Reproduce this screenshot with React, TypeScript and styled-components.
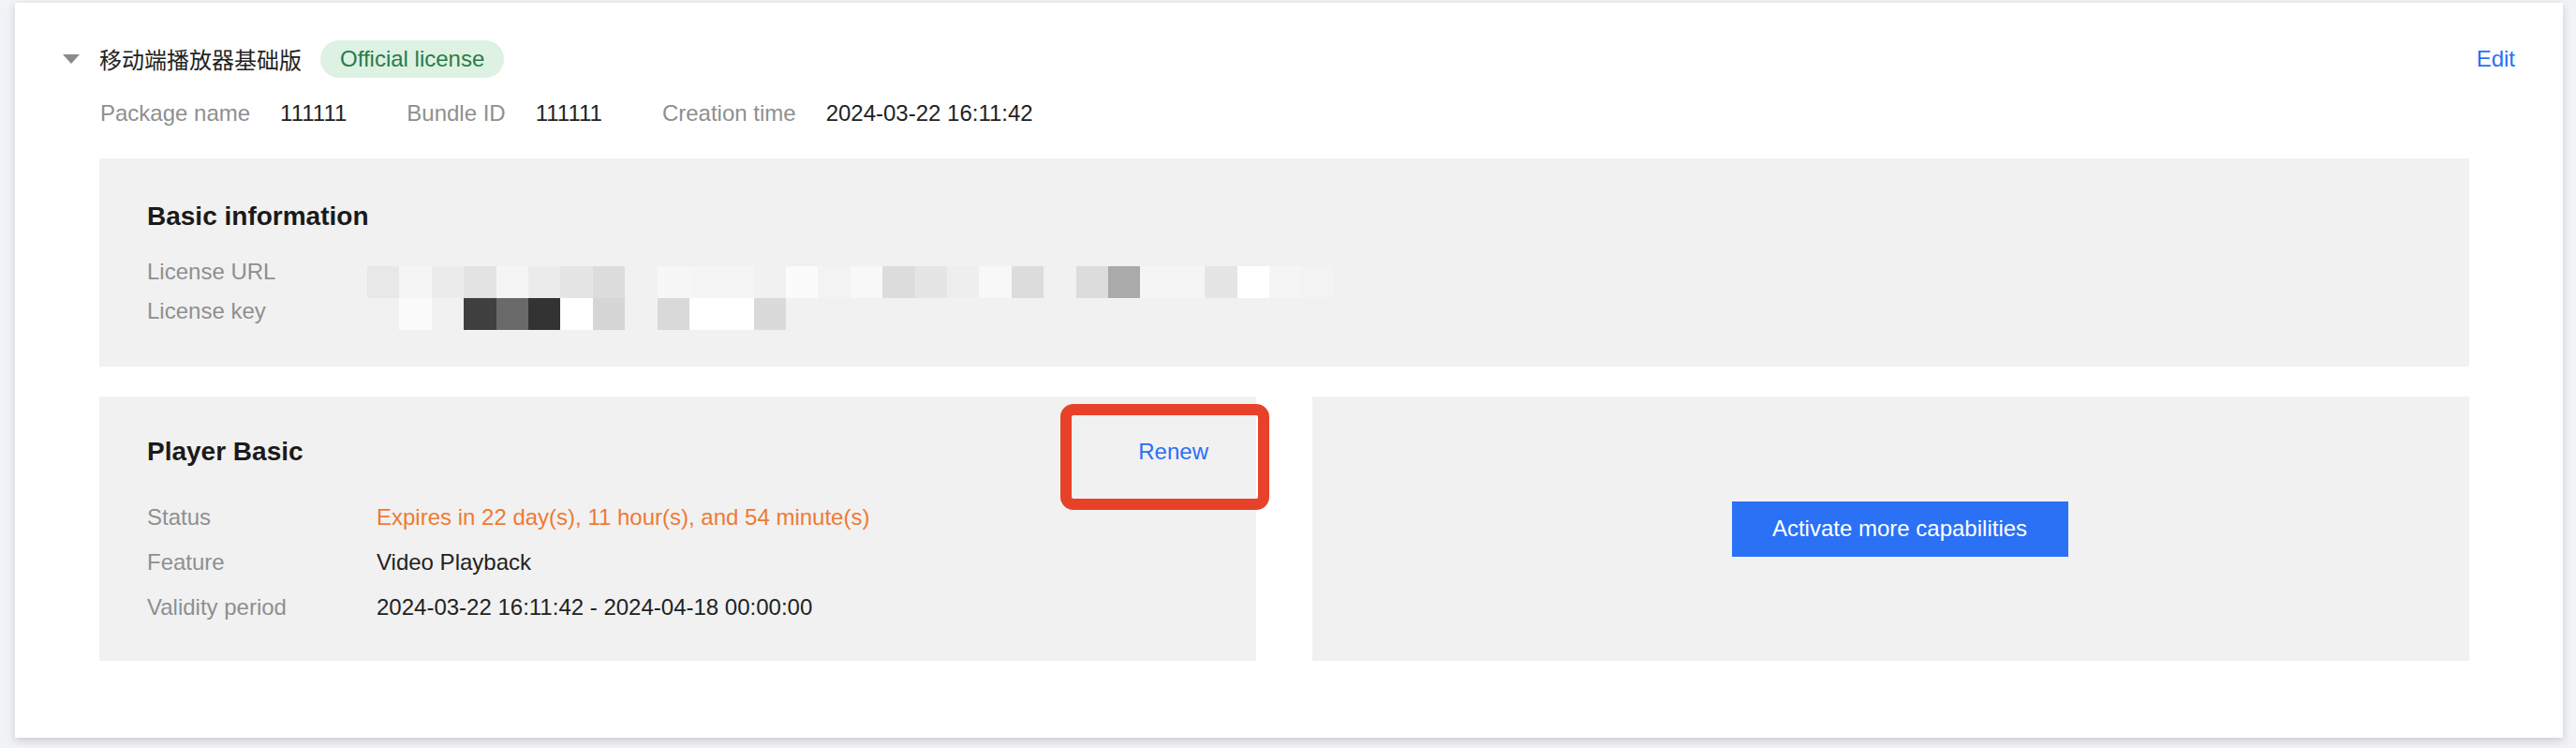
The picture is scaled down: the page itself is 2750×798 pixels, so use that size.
import styled, { createGlobalStyle } from "styled-components";

const GlobalStyle = createGlobalStyle`
    html, body {
        margin: 0;
        padding: 0;
        background: #f2f3f6;
    }
    body {
        font-family: "Liberation Sans", "Noto Sans CJK SC", Arial, sans-serif;
        color: #222;
    }
`;

const Page = styled.div`
    padding: 3px 14px 11px 16px;
`;

const Card = styled.section`
    background: #fff;
    padding: 40px 51px 82px 51px;
    box-shadow: 0 3px 9px rgba(60, 64, 90, 0.22);
`;

const HeaderRow = styled.div`
    display: flex;
    align-items: center;
    height: 40px;
`;

const Caret = styled.span`
    width: 0;
    height: 0;
    border-left: 9.5px solid transparent;
    border-right: 9.5px solid transparent;
    border-top: 10px solid #8a8a8a;
    margin-right: 21px;
`;

const Title = styled.h2`
    margin: 0;
    font-size: 24px;
    font-weight: 400;
    line-height: 40px;
    color: #222;
    font-family: "Noto Sans CJK SC", "Liberation Sans", sans-serif;
`;

const Tag = styled.span`
    margin-left: 20px;
    height: 40px;
    line-height: 40px;
    padding: 0 21px;
    border-radius: 20px;
    background: #ddf2e3;
    color: #2b7a49;
    font-size: 24px;
`;

const TextLink = styled.a`
    color: #2a6ff6;
    font-size: 24px;
    line-height: 40px;
    cursor: pointer;
    text-decoration: none;
`;

const Spacer = styled.div`
    flex: 1;
`;

const MetaRow = styled.div`
    display: flex;
    align-items: center;
    margin: 20px 0 0 40px;
    font-size: 24px;
    line-height: 36px;
`;

const MetaLabel = styled.span`
    color: #8f8f8f;
    margin-right: 32px;
`;

const MetaValue = styled.span`
    color: #222;
    margin-right: 64px;
`;

const Panels = styled.div`
    margin: 30px 49px 0 39px;
    display: flex;
    flex-direction: column;
    gap: 32px;
`;

const Panel = styled.div`
    background: #f1f1f1;
    padding: 42px 51px 39px 51px;
`;

const PanelTitle = styled.h3`
    margin: 0;
    font-size: 28px;
    font-weight: 700;
    line-height: 40px;
    color: #1a1a1a;
`;

const BasicBody = styled.div`
    display: flex;
    margin-top: 19px;
`;

const LabelCol = styled.div`
    width: 235px;
    display: flex;
    flex-direction: column;
    gap: 2px;
`;

const Label = styled.div`
    color: #8f8f8f;
    font-size: 24px;
    line-height: 40px;
`;

const Redacted = styled.div`
    margin-top: 14px;
    display: flex;
    flex-direction: column;
`;

const RedactedRow = styled.div`
    display: flex;
    height: 34px;
`;

const Cell = styled.span<{ $shade: string }>`
    width: 34.4px;
    height: 34px;
    background: ${(p) => p.$shade};
`;

const BottomRow = styled.div`
    display: grid;
    grid-template-columns: 1fr 1fr;
    gap: 60px;
    height: 282px;
`;

const PlanPanel = styled(Panel)`
    position: relative;
    padding: 39px 51px 36px 51px;
`;

const PlanHeader = styled.div`
    display: flex;
    align-items: center;
    justify-content: space-between;
`;

const Rows = styled.div`
    margin-top: 30px;
    display: flex;
    flex-direction: column;
    gap: 8px;
`;

const Row = styled.div`
    display: flex;
    font-size: 24px;
    line-height: 40px;
`;

const RowLabel = styled.span`
    width: 245px;
    color: #8f8f8f;
`;

const RowValue = styled.span<{ $warn?: boolean }>`
    color: ${(p) => (p.$warn ? "#ef7a32" : "#222")};
`;

const Highlight = styled.div`
    position: absolute;
    left: 1026px;
    top: 8px;
    width: 199px;
    height: 89px;
    border: 12px solid #e8412a;
    border-radius: 14px;
    pointer-events: none;
`;

const CtaPanel = styled.div`
    background: #f1f1f1;
    display: flex;
    align-items: center;
    justify-content: center;
    padding-left: 19px;
`;

const PrimaryButton = styled.button`
    width: 359px;
    height: 59px;
    border: 0;
    border-radius: 0;
    background: #2a71f6;
    color: #fff;
    font-family: inherit;
    font-size: 24px;
    cursor: pointer;
`;

const urlShades = [
    "#e8e8e8", "#f5f5f5", "#ebebeb", "#e3e3e3", "#f5f5f5", "#ebebeb",
    "#e5e5e5", "#dcdcdc", "#f1f1f1", "#f7f7f7", "#f5f5f5", "#f5f5f5",
    "#f1f1f1", "#fbfbfb", "#f3f3f3", "#f8f8f8", "#dcdcdc", "#e5e5e5",
    "#eeeeee", "#f8f8f8", "#dcdcdc", "#f1f1f1", "#dcdcdc", "#aaaaaa",
    "#f5f5f5", "#f5f5f5", "#e5e5e5", "#ffffff", "#f5f5f5", "#f3f3f3",
];

const keyShades = [
    "#f1f1f1", "#fafafa", "#f1f1f1", "#404040", "#6a6a6a", "#333333",
    "#ffffff", "#d6d6d6", "#f1f1f1", "#d9d9d9", "#ffffff", "#ffffff",
    "#dadada",
];

const meta = [
    { label: "Package name", value: "111111" },
    { label: "Bundle ID", value: "111111" },
    { label: "Creation time", value: "2024-03-22 16:11:42" },
];

function App() {
    return (
        <Page>
            <GlobalStyle />
            <Card>
                <HeaderRow>
                    <Caret />
                    <Title>移动端播放器基础版</Title>
                    <Tag>Official license</Tag>
                    <Spacer />
                    <TextLink>Edit</TextLink>
                </HeaderRow>
                <MetaRow>
                    {meta.map((m) => (
                        <span key={m.label}>
                            <MetaLabel>{m.label}</MetaLabel>
                            <MetaValue>{m.value}</MetaValue>
                        </span>
                    ))}
                </MetaRow>
                <Panels>
                    <Panel>
                        <PanelTitle>Basic information</PanelTitle>
                        <BasicBody>
                            <LabelCol>
                                <Label>License URL</Label>
                                <Label>License key</Label>
                            </LabelCol>
                            <Redacted>
                                <RedactedRow>
                                    {urlShades.map((s, i) => (
                                        <Cell key={i} $shade={s} />
                                    ))}
                                </RedactedRow>
                                <RedactedRow>
                                    {keyShades.map((s, i) => (
                                        <Cell key={i} $shade={s} />
                                    ))}
                                </RedactedRow>
                            </Redacted>
                        </BasicBody>
                    </Panel>
                    <BottomRow>
                        <PlanPanel>
                            <PlanHeader>
                                <PanelTitle>Player Basic</PanelTitle>
                                <TextLink>Renew</TextLink>
                            </PlanHeader>
                            <Rows>
                                <Row>
                                    <RowLabel>Status</RowLabel>
                                    <RowValue $warn>
                                        Expires in 22 day(s), 11 hour(s), and 54 minute(s)
                                    </RowValue>
                                </Row>
                                <Row>
                                    <RowLabel>Feature</RowLabel>
                                    <RowValue>Video Playback</RowValue>
                                </Row>
                                <Row>
                                    <RowLabel>Validity period</RowLabel>
                                    <RowValue>2024-03-22 16:11:42 - 2024-04-18 00:00:00</RowValue>
                                </Row>
                            </Rows>
                            <Highlight />
                        </PlanPanel>
                        <CtaPanel>
                            <PrimaryButton>Activate more capabilities</PrimaryButton>
                        </CtaPanel>
                    </BottomRow>
                </Panels>
            </Card>
        </Page>
    );
}

export default App;
